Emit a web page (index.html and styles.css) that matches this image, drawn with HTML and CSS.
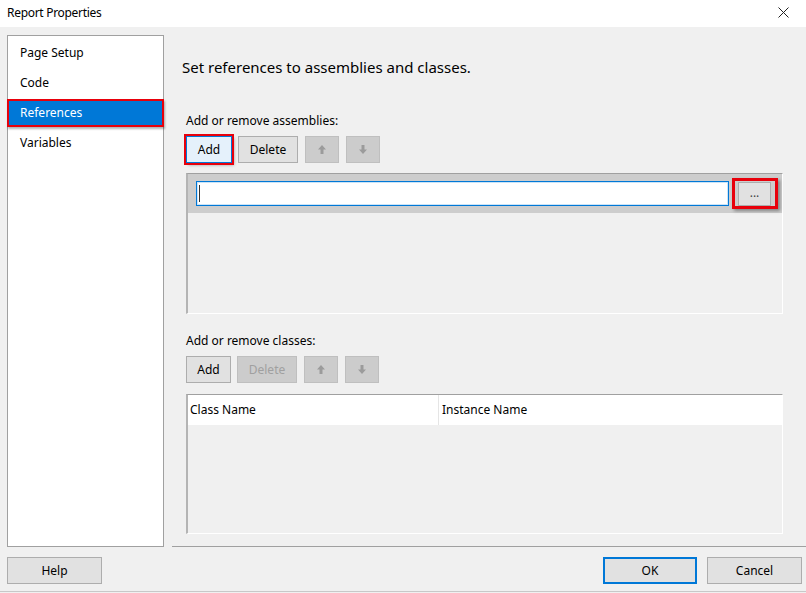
FILE: index.html
```html
<!DOCTYPE html>
<html lang="en">
<head>
    <meta charset="UTF-8">
    <title>Report Properties</title>
    <link rel="stylesheet" href="styles.css">
</head>
<body>
    <div class="window">
        <div class="titlebar">
            <span class="title">Report Properties</span>
            <svg class="close-icon" width="11" height="11" viewBox="0 0 11 11">
                <path d="M0.5 0.5 L10.5 10.5 M10.5 0.5 L0.5 10.5" stroke="#222" stroke-width="1" fill="none"/>
            </svg>
        </div>

        <div class="dialog">
            <div class="main">
                <ul class="nav">
                    <li class="nav-item">Page Setup</li>
                    <li class="nav-item">Code</li>
                    <li class="nav-item selected">References</li>
                    <li class="nav-item">Variables</li>
                </ul>

                <div class="content">
                    <h2 class="heading">Set references to assemblies and classes.</h2>

                    <div class="section-label">Add or remove assemblies:</div>
                    <div class="toolbar">
                        <button class="btn btn-add active">Add</button>
                        <button class="btn btn-delete">Delete</button>
                        <button class="btn btn-arrow" disabled>
                            <svg width="8" height="9" viewBox="0 0 8 9"><polygon points="4,0 8,4.5 5.5,4.5 5.5,9 2.5,9 2.5,4.5 0,4.5" fill="#9b9b9b"/></svg>
                        </button>
                        <button class="btn btn-arrow" disabled>
                            <svg width="8" height="9" viewBox="0 0 8 9"><polygon points="2.5,0 5.5,0 5.5,4.5 8,4.5 4,9 0,4.5 2.5,4.5" fill="#9b9b9b"/></svg>
                        </button>
                    </div>
                    <div class="list assemblies">
                        <div class="edit-row">
                            <div class="path-input"><span class="caret"></span></div>
                            <span class="browse-mark"><button class="btn btn-browse">...</button></span>
                        </div>
                    </div>

                    <div class="section-label classes-label">Add or remove classes:</div>
                    <div class="toolbar">
                        <button class="btn btn-add">Add</button>
                        <button class="btn btn-delete" disabled>Delete</button>
                        <button class="btn btn-arrow" disabled>
                            <svg width="8" height="9" viewBox="0 0 8 9"><polygon points="4,0 8,4.5 5.5,4.5 5.5,9 2.5,9 2.5,4.5 0,4.5" fill="#9b9b9b"/></svg>
                        </button>
                        <button class="btn btn-arrow" disabled>
                            <svg width="8" height="9" viewBox="0 0 8 9"><polygon points="2.5,0 5.5,0 5.5,4.5 8,4.5 4,9 0,4.5 2.5,4.5" fill="#9b9b9b"/></svg>
                        </button>
                    </div>
                    <div class="list classes">
                        <div class="list-header">
                            <div class="col col-class">Class Name</div>
                            <div class="col col-instance">Instance Name</div>
                        </div>
                    </div>
                </div>
            </div>

            <div class="footer">
                <button class="btn btn-footer">Help</button>
                <button class="btn btn-footer btn-ok">OK</button>
                <button class="btn btn-footer btn-cancel">Cancel</button>
            </div>
        </div>
    </div>
</body>
</html>
```

FILE: styles.css
```css
/* reset */
* {
    margin: 0;
    padding: 0;
    box-sizing: border-box;
}

body {
    font-family: "Noto Sans", "Liberation Sans", sans-serif;
    font-size: 12px;
    color: #000;
    background-color: #f0f0f0;
}

/* window frame */
.window {
    width: 806px;
    height: 592px;
    background-color: #f0f0f0;
    border-bottom: 1px solid #c8c8c8;
    display: flex;
    flex-direction: column;
}

.titlebar {
    height: 27px;
    background-color: #fff;
    display: flex;
    align-items: center;
    justify-content: space-between;
    padding: 0 17px 3px 7px;
}

.title {
    font-size: 12px;
    letter-spacing: -0.3px;
}

/* dialog body */
.dialog {
    flex: 1;
    display: flex;
    flex-direction: column;
    padding: 8px 0 0 7px;
}

.main {
    display: flex;
    height: 512px;
}

/* left nav */
.nav {
    list-style: none;
    width: 157px;
    background-color: #fff;
    border: 1px solid #a0a0a0;
    padding-top: 2px;
}

.nav-item {
    height: 30px;
    line-height: 30px;
    padding-left: 12px;
    font-size: 12px;
}

.nav-item.selected {
    background-color: #0078d7;
    color: #fff;
    border: 2px solid #e8000b;
    margin: 1px -1px 1px -1px;
    height: 28px;
    line-height: 24px;
    padding-left: 11px;
    box-shadow: 1px 2px 2px rgba(0, 0, 0, 0.3);
}

/* right panel */
.content {
    flex: 1;
    margin-left: 8px;
    padding: 22px 23px 0 14px;
    border-bottom: 1px solid #a0a0a0;
}

.heading {
    font-size: 15px;
    font-weight: normal;
    line-height: 20px;
    margin-left: -4px;
}

.section-label {
    margin-top: 36px;
    line-height: 16px;
}

.classes-label {
    margin-top: 19px;
}

.toolbar {
    display: flex;
    margin-top: 7px;
    height: 27px;
}

/* buttons */
.btn {
    font-family: inherit;
    font-size: 12px;
    color: #000;
    background-color: #e1e1e1;
    border: 1px solid #adadad;
    height: 27px;
    display: flex;
    align-items: center;
    justify-content: center;
}

.btn:disabled {
    background-color: #cccccc;
    border-color: #bfbfbf;
    color: #a0a0a0;
}

.btn-add {
    width: 45px;
    margin-right: 6px;
}

.btn-add.active {
    width: 46px;
    background-color: #e5f1fb;
    border-color: #0078d7;
    outline: 2px solid #e8000b;
    outline-offset: 0;
    box-shadow: 2px 2px 3px rgba(0, 0, 0, 0.35);
}

.btn-delete {
    width: 60px;
    margin-right: 7px;
}

.btn-arrow {
    width: 34px;
    margin-right: 7px;
}

/* list boxes */
.list {
    margin-top: 10px;
    width: 597px;
    border-top: 1px solid #a0a0a0;
    border-left: 2px solid #b4b4b4;
    border-right: 1px solid #fff;
    border-bottom: 1px solid #fff;
}

.assemblies {
    height: 141px;
}

.edit-row {
    height: 39px;
    background-color: #cdcdcd;
    display: flex;
    align-items: center;
    padding-left: 8px;
}

.path-input {
    width: 533px;
    height: 25px;
    background-color: #fff;
    border: 1px solid #0078d7;
    box-shadow: inset 0 0 0 1px #cce4f7;
    display: flex;
    align-items: center;
    padding-left: 2px;
}

.caret {
    width: 1px;
    height: 17px;
    background-color: #333;
}

.browse-mark {
    margin-left: 3px;
    border: 3px solid #e8000b;
    padding: 1px 4px 0 3px;
    box-shadow: 2px 2px 3px rgba(0, 0, 0, 0.35);
}

.btn-browse {
    width: 33px;
    height: 24px;
    padding-bottom: 4px;
    color: #444;
}

.classes {
    margin-top: 11px;
    height: 140px;
}

.list-header {
    display: flex;
    height: 30px;
    background-color: #fff;
}

.col {
    line-height: 30px;
}

.col-class {
    width: 251px;
    padding-left: 2px;
    border-right: 1px solid #e5e5e5;
}

.col-instance {
    padding-left: 3px;
}

/* footer */
.footer {
    display: flex;
    padding: 10px 4px 0 0;
}

.btn-footer {
    width: 95px;
}

.btn-ok {
    margin-left: auto;
    margin-right: 10px;
    border: 2px solid #0078d7;
    width: 94px;
}
```
